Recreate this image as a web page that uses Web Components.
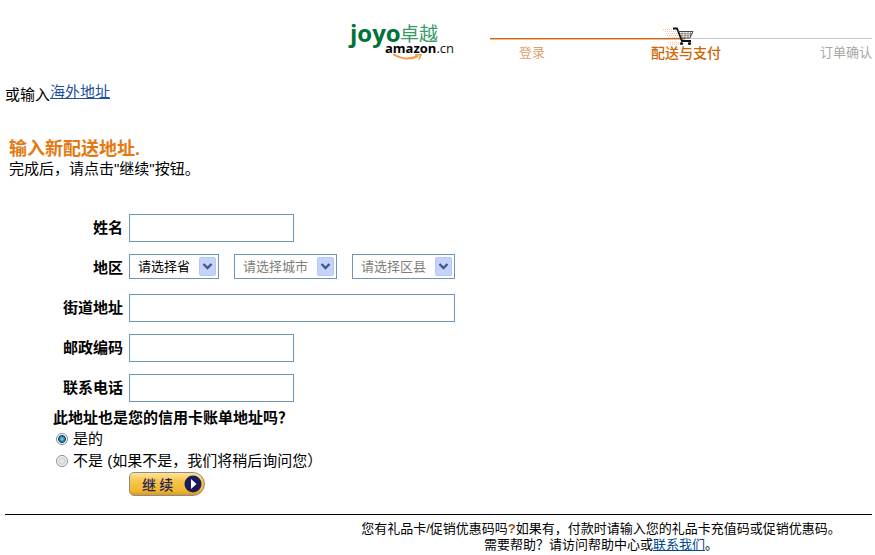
<!DOCTYPE html>
<html lang="zh-CN">
<head>
<meta charset="utf-8">
<title>输入新配送地址</title>
<style>
body{margin:0;background:#fff;color:#000;font:15px/20px "Liberation Sans","Noto Sans CJK SC",sans-serif}
</style>
</head>
<body>
<checkout-page></checkout-page>
<script>
const define=(name,html,setup)=>customElements.define(name,class extends HTMLElement{
  connectedCallback(){
    if(this.shadowRoot)return;
    const t=document.createElement('template');
    t.innerHTML=html;
    this.attachShadow({mode:'open'}).append(t.content.cloneNode(true));
    if(setup)setup(this,this.shadowRoot);
  }
});

define('site-logo',`
<style>
:host{display:block}
svg{display:block;overflow:visible}
.j{font:bold 24px "Open Sans",sans-serif;fill:#00723a}
.z{font:19px "Noto Sans CJK SC",sans-serif;fill:#3c9c69}
.a{font:bold 13px "Open Sans",sans-serif;fill:#000}
.c{font:13px "Open Sans",sans-serif;fill:#111}
</style>
<svg width="108" height="42" viewBox="0 0 108 42" role="img" aria-label="joyo卓越 amazon.cn">
<text class="j" x="2" y="22">joyo</text>
<text class="z" x="52" y="21">卓越</text>
<path d="M45 34Q58 42 70 36" fill="none" stroke="#f39a3c" stroke-width="2"/>
<path d="M67 35l6-.5-2 5" fill="none" stroke="#f39a3c" stroke-width="1.500"/>
<text class="a" x="37" y="33">amazon<tspan class="c">.cn</tspan></text>
</svg>`);

define('checkout-progress',`
<style>
:host{display:block;min-width:0}
.track{position:relative;display:flex;height:2px}
.done{width:195px;border-top:1px solid #c86818;background:#f3ba86;height:1px}
.todo{flex:1;border-top:1px solid #c9c9c9}
svg{position:absolute;left:172px;top:-11px}
ol{list-style:none;margin:0;padding:3px 0 0 29px;display:grid;grid-template-columns:132px 1fr auto;font-size:13px;line-height:20px;white-space:nowrap}
li:nth-child(1){color:#e0a06c}
li:nth-child(2){color:#cf6600;font-size:14px;font-weight:500}
li:nth-child(3){color:#a6a6a6}
</style>
<div class="track"><div class="done"></div><div class="todo"></div>
<svg width="34" height="20" viewBox="0 0 34 20" aria-hidden="true">
<g stroke="#f2c4a8" stroke-dasharray="1 1"><path d="M1 2.500h11M3 4.500h11M4 6.500h11M5 8.500h11M6 10.500h11M7 12.500h10M6 15.500h11M8 17.500h9"/></g>
<path d="M11 1.500h4l5 12.500h9" fill="none" stroke="#111" stroke-width="1.800"/>
<path d="M16 4.500h15l-3 6.500h-9" fill="none" stroke="#444" stroke-width="1"/>
<path d="M18 6.700h12M19 8.700h10M20 4v7M23 4v7M26 4v7M28.500 4v6" stroke="#555" stroke-width=".6"/>
<circle cx="19.500" cy="16.500" r="1.600" fill="#111"/><circle cx="27.500" cy="16.500" r="1.600" fill="#111"/>
</svg></div>
<ol><li>登录</li><li aria-current="step">配送与支付</li><li>订单确认</li></ol>`);

define('text-field',`
<style>
:host{display:grid;grid-template-columns:118px 1fr;column-gap:6px;align-items:center}
label{font-weight:bold;text-align:right;line-height:28px}
input{box-sizing:border-box;width:165px;max-width:100%;height:28px;margin:0;padding:2px 6px;border:1px solid #6f96b7;background:#fff;font:inherit}
:host([wide]) input{width:326px}
</style>
<label for="i"></label><input id="i" type="text">`,(h,r)=>{r.querySelector('label').textContent=h.getAttribute('label')});

define('region-field',`
<style>
:host{display:grid;grid-template-columns:118px 1fr;column-gap:6px;align-items:start}
label{font-weight:bold;text-align:right;line-height:28px}
.set{display:flex;gap:15px}
.box{position:relative;width:103px}
.box:first-child{width:90px}
select{display:block;appearance:none;box-sizing:border-box;width:100%;height:25px;margin:0;padding:0 24px 0 8px;border:1px solid #6f96b7;border-radius:0;background:#fff;color:#000;opacity:1;font:13px "Liberation Sans","Noto Sans CJK SC",sans-serif}
select:disabled{color:#7e8078;opacity:1}
svg{position:absolute;right:3px;top:3px;pointer-events:none}
</style>
<label for="p">地区</label>
<div class="set">
<div class="box"><select id="p"><option>请选择省</option></select></div>
<div class="box"><select aria-label="城市" disabled><option>请选择城市</option></select></div>
<div class="box"><select aria-label="区县" disabled><option>请选择区县</option></select></div>
</div>`,(h,r)=>{
  r.querySelectorAll('.box').forEach(b=>b.insertAdjacentHTML('beforeend','<svg width="17" height="19" viewBox="0 0 17 19" aria-hidden="true"><rect x=".5" y=".5" width="16" height="18" rx="1.5" fill="#c3d3fb" stroke="#b5c8f3"/><path d="M4.500 7l4 4 4-4" fill="none" stroke="#44597f" stroke-width="2.400"/></svg>'));
});

define('billing-choice',`
<style>
:host{display:block}
fieldset{border:0;margin:0;padding:0 0 0 48px;min-width:0}
legend{padding:0;font-weight:bold;line-height:21px}
label{display:flex;align-items:center;gap:5px;line-height:22px;padding-left:3px}
input{appearance:none;box-sizing:border-box;flex:none;width:12px;height:12px;margin:0;border:1px solid #85898c;border-radius:50%;background:radial-gradient(circle,#e2e3e4 30%,#c9cccf 45%,#fff 65%)}
input:checked{background:radial-gradient(circle at 50% 50%,#63c5e8 10%,#114a73 50%,#fff 62%)}
</style>
<fieldset><legend>此地址也是您的信用卡账单地址吗？</legend>
<label><input type="radio" name="b" checked>是的</label>
<label><input type="radio" name="b"><span>不是 (如果不是，我们将稍后询问您）</span></label></fieldset>`);

define('continue-button',`
<style>
:host{display:block}
button{display:flex;align-items:center;justify-content:space-between;width:76px;height:24px;margin:0;padding:0 2px 0 12px;border:1px solid #8c8a91;border-radius:5px 12px 12px 5px;background:linear-gradient(#fde49a,#f8c64c 35%,#f1b62d 80%,#d89b24);color:#25215c;font:500 14px/20px "Noto Sans CJK SC",sans-serif;white-space:nowrap}
svg{flex:none}
</style>
<button type="button"><span>继 续</span><svg width="18" height="18" viewBox="0 0 18 18" aria-hidden="true"><circle cx="9" cy="9" r="8.500" fill="#1c1b5b"/><path d="M7 4l5.500 5L7 14z" fill="#fff"/></svg></button>`);

define('page-footer',`
<style>
:host{display:block;border-top:1px solid #000;padding:6px 0 0 325px;font-size:13px;line-height:16px;text-align:center}
p{margin:0}
a{color:#004b91}
b{color:#a04a18}
</style>
<p>您有礼品卡/促销优惠码吗<b>?</b>如果有，付款时请输入您的礼品卡充值码或促销优惠码。</p>
<p>需要帮助？请访问帮助中心或<a href="#">联系我们</a>。</p>`);

define('checkout-page',`
<style>
:host{display:block;padding:20px 3px 0 5px}
header{display:grid;grid-template-columns:108px 1fr;column-gap:34px;padding-left:343px}
checkout-progress{padding-top:18px}
.alt{display:flex;align-items:flex-end;margin:19px 0 0;line-height:20px}
.alt a{color:#1b4fa0;padding-bottom:3px}
.intro{padding:34px 0 0 4px}
h1{margin:0;font-size:18px;line-height:20px;color:#e47911}
p{margin:0}
form{margin:35px 0 0}
.fields{display:grid;row-gap:12px}
billing-choice{margin-top:5px}
continue-button{padding-left:124px}
page-footer{margin-top:18px}
</style>
<header><site-logo></site-logo><checkout-progress></checkout-progress></header>
<main>
<p class="alt"><span>或输入</span><a href="#">海外地址</a></p>
<div class="intro"><h1>输入新配送地址.</h1><p>完成后，请点击"继续"按钮。</p></div>
<form><div class="fields">
<text-field label="姓名"></text-field>
<region-field></region-field>
<text-field label="街道地址" wide></text-field>
<text-field label="邮政编码"></text-field>
<text-field label="联系电话"></text-field>
</div>
<billing-choice></billing-choice>
<continue-button></continue-button></form>
</main>
<page-footer></page-footer>`);
</script>
</body>
</html>
